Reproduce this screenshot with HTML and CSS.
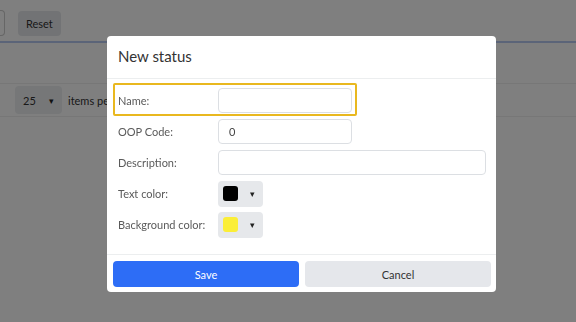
FILE: index.html
```html
<!DOCTYPE html>
<html>
<head>
<meta charset="utf-8">
<link rel="stylesheet" href="styles.css">
</head>
<body>
<div class="page">
    <div class="toolbar">
        <input type="text" class="search">
        <button class="btn-reset">Reset</button>
    </div>
    <div class="rule"></div>
    <div class="table-head"></div>
    <div class="pager">
        <div class="page-size">25 <span class="caret">&#9662;</span></div>
        <span class="pager-text">items per page</span>
    </div>
</div>

<div class="backdrop">
    <div class="dialog">
        <div class="dialog-header">New status</div>
        <div class="dialog-body">
            <div class="highlight"></div>
            <div class="form-row">
                <label for="name">Name:</label>
                <input type="text" id="name" class="field short">
            </div>
            <div class="form-row">
                <label for="oop">OOP Code:</label>
                <input type="text" id="oop" class="field short" value="0">
            </div>
            <div class="form-row">
                <label for="desc">Description:</label>
                <input type="text" id="desc" class="field wide">
            </div>
            <div class="form-row">
                <label>Text color:</label>
                <button class="swatch-btn"><span class="swatch black"></span><span class="caret">&#9662;</span></button>
            </div>
            <div class="form-row">
                <label>Background color:</label>
                <button class="swatch-btn"><span class="swatch yellow"></span><span class="caret">&#9662;</span></button>
            </div>
        </div>
        <div class="dialog-footer">
            <button class="btn btn-save">Save</button>
            <button class="btn btn-cancel">Cancel</button>
        </div>
    </div>
</div>
</body>
</html>
```

FILE: styles.css
```css
body {
    margin: 0;
    font-family: Lato, "Open Sans", sans-serif;
    color: #555;
    background: #fff;
    width: 576px;
    height: 322px;
    overflow: hidden;
}

/* page behind the dialog */
.page {
    padding-top: 10px;
}
.toolbar {
    display: flex;
    align-items: center;
    gap: 13px;
    height: 26px;
}
.search {
    width: 5px;
    height: 26px;
    box-sizing: border-box;
    border: 1px solid #ccc;
    border-left: none;
    border-radius: 0 4px 4px 0;
    padding: 0;
}
.btn-reset {
    height: 25px;
    padding: 0 8px;
    border: none;
    border-radius: 4px;
    background: #e5e7eb;
    color: #333;
    font: 11px Lato, sans-serif;
}
.rule {
    margin-top: 5px;
    height: 2px;
    background: #b6c8f0;
}
.table-head {
    height: 40px;
    border-bottom: 1px solid #eee;
}
.pager {
    display: flex;
    align-items: center;
    gap: 6px;
    height: 32px;
    padding-left: 15px;
    border-bottom: 1px solid #eee;
}
.page-size {
    width: 47px;
    height: 28px;
    box-sizing: border-box;
    padding: 0 8px;
    display: flex;
    align-items: center;
    justify-content: space-between;
    background: #eceef1;
    border-radius: 4px;
    font-size: 11px;
    color: #333;
}
.pager-text {
    max-width: 39px;
    overflow: hidden;
    white-space: nowrap;
    font-size: 11px;
    color: #333;
}

/* modal */
.backdrop {
    position: fixed;
    inset: 0;
    background: rgba(0, 0, 0, 0.5);
}
.dialog {
    width: 389px;
    margin: 36px 0 0 107px;
    background: #fff;
    border-radius: 4px;
}
.dialog-header {
    height: 43px;
    box-sizing: border-box;
    padding: 0 11px 3px;
    display: flex;
    align-items: center;
    font-size: 15px;
    color: #333;
    border-bottom: 1px solid #eceeef;
}
.dialog-body {
    position: relative;
    display: flex;
    flex-direction: column;
    gap: 6px;
    padding: 9px 10px 17px 11px;
}
.form-row {
    display: flex;
    align-items: center;
    height: 25px;
}
.form-row label {
    width: 100px;
    flex: none;
    font-size: 11px;
    color: #5a5a5a;
}
.field {
    height: 25px;
    box-sizing: border-box;
    border: 1px solid #dcdfe3;
    border-radius: 4px;
    padding: 0 10px;
    font: 11px Lato, sans-serif;
    color: #444;
    outline: none;
}
.field.short {
    width: 134px;
}
.field.wide {
    flex: 1;
}
.swatch-btn {
    width: 45px;
    height: 26px;
    box-sizing: border-box;
    padding: 0 8px 0 5px;
    border: none;
    border-radius: 4px;
    background: #e6e8eb;
    display: flex;
    align-items: center;
    justify-content: space-between;
}
.swatch {
    width: 15px;
    height: 15px;
    border-radius: 3px;
}
.swatch.black {
    background: #000;
}
.swatch.yellow {
    background: #fbee37;
}
.caret {
    font-size: 9px;
    color: #222;
}
.highlight {
    position: absolute;
    left: 6px;
    top: 4px;
    width: 244px;
    height: 33px;
    box-sizing: border-box;
    border: 2px solid #e9b81f;
    border-radius: 2px;
}
.dialog-footer {
    display: flex;
    gap: 6px;
    padding: 6px 5px 5px 6px;
    border-top: 1px solid #eceeef;
}
.btn {
    flex: 1;
    height: 26px;
    border: none;
    border-radius: 4px;
    font: 11px Lato, sans-serif;
}
.btn-save {
    background: #2d6df6;
    color: #fff;
}
.btn-cancel {
    background: #e5e7eb;
    color: #333;
}
```
